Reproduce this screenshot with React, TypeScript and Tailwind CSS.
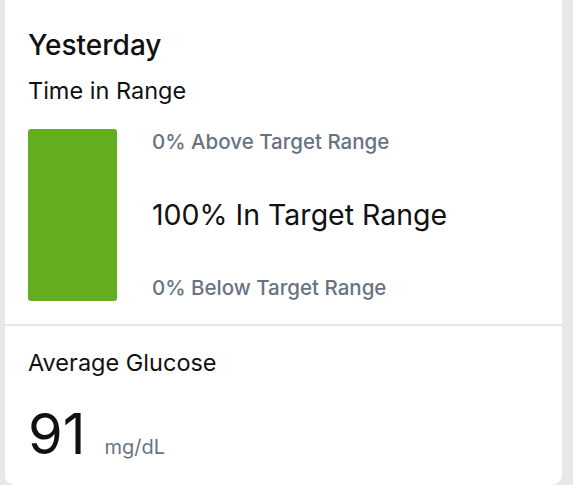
const App = () => {
  return (
    <main className="w-[573px] h-[485px] bg-[#e9e8e5] px-[5px] pr-[11px] overflow-hidden" style={{ fontFamily: "Inter, 'Noto Sans', sans-serif" }}>
      <div className="h-[485px] bg-white rounded-b-[10px] flex flex-col">
        <section className="px-[23px] pt-[28px] pb-[23px] border-b-2 border-[#e6e6e6]">
          <h2 className="text-[28px] leading-[34px] font-medium text-[#111]">Yesterday</h2>
          <p className="mt-[15px] text-[23.5px] leading-[28px] text-[#111]">Time in Range</p>
          <div className="mt-[24px] flex">
            <div className="w-[89px] h-[172px] bg-[#62ae1f] rounded-[3px]" />
            <div className="ml-[35px] flex flex-col justify-between h-[172px]">
              <p className="text-[20.5px] leading-[26px] font-medium text-[#687382]">0% Above Target Range</p>
              <p className="text-[28.5px] leading-[36px] text-[#111]">100% In Target Range</p>
              <p className="text-[20.5px] leading-[26px] font-medium text-[#687382]">0% Below Target Range</p>
            </div>
          </div>
        </section>
        <section className="px-[23px] pt-[23px]">
          <p className="text-[23.5px] leading-[28px] text-[#111]">Average Glucose</p>
          <div className="mt-[27px] flex items-baseline">
            <span className="text-[56px] leading-[60px] text-[#111]">91</span>
            <span className="ml-[19px] text-[20px] text-[#687382]">mg/dL</span>
          </div>
        </section>
      </div>
    </main>
  );
};

export default App;
